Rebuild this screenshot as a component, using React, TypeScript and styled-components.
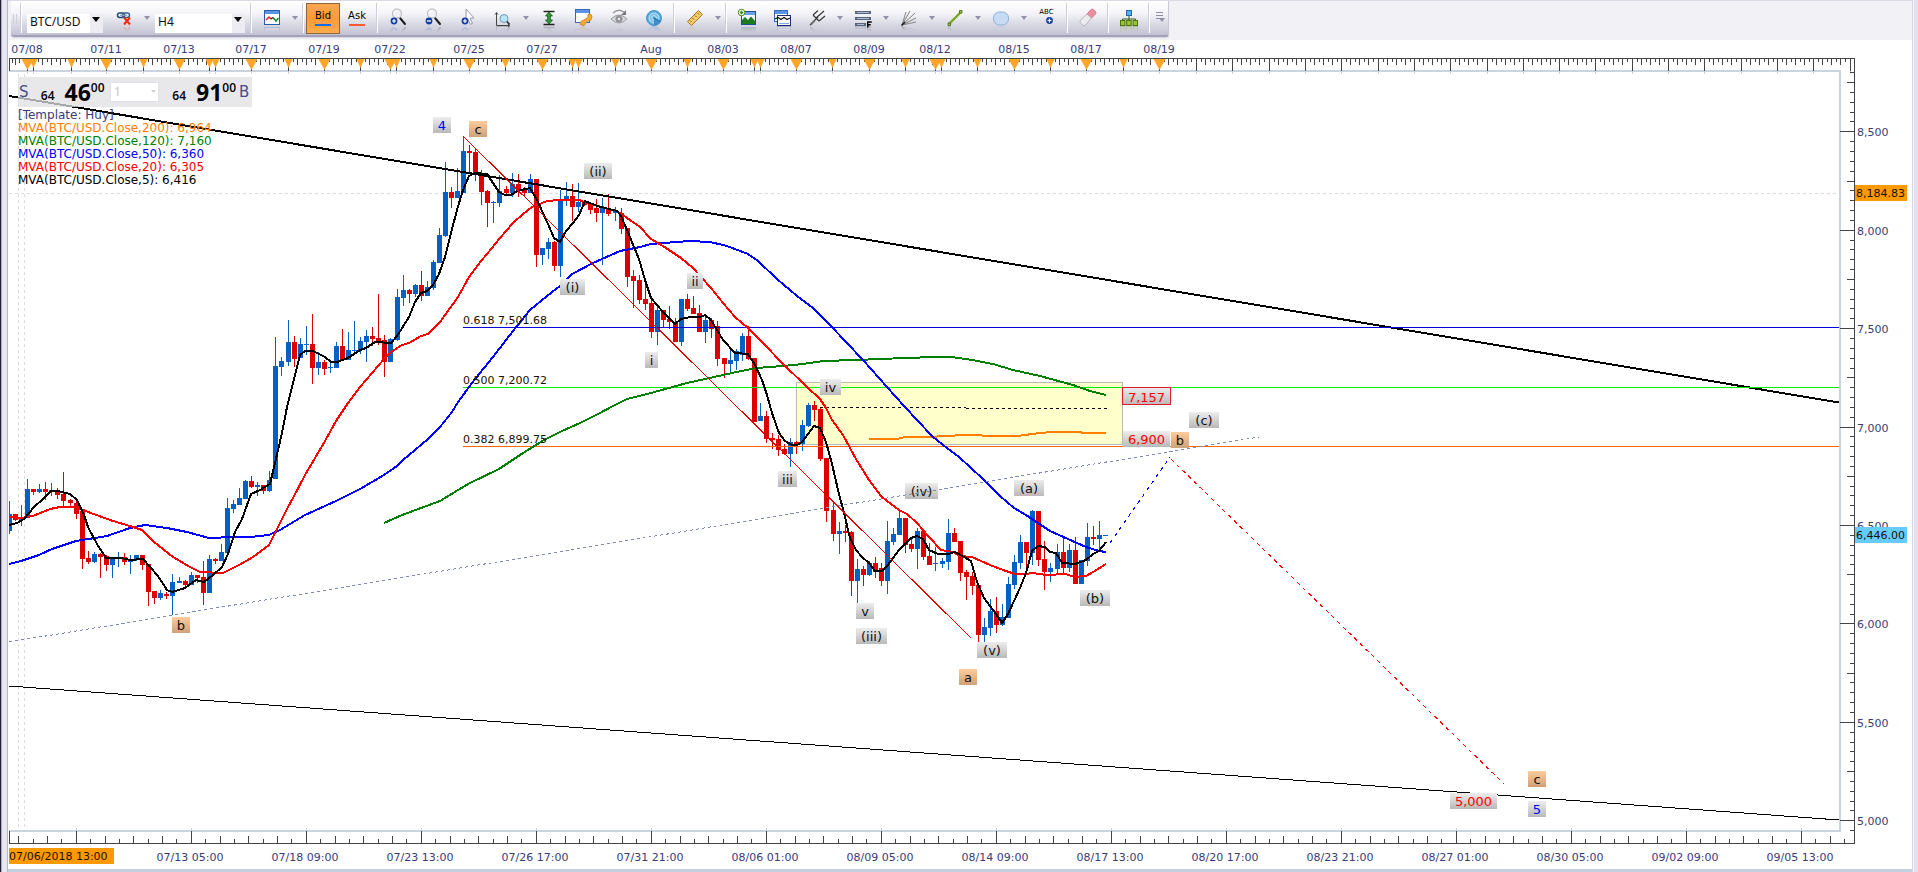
import React from "react";
import styled, { createGlobalStyle, css } from "styled-components";

const UI_FONT = '"Noto Sans", "Open Sans", sans-serif';
const CHART_FONT = '"DejaVu Sans", Verdana, sans-serif';
const INK = "#3b3a78";
const UP = "#0560c3";
const DOWN = "#dd0000";

const GlobalStyle = createGlobalStyle`
  body { margin: 0; background: #fff; font-family: ${UI_FONT}; }
  *, *::before, *::after { box-sizing: border-box; }
`;

/* ---------- window frame ---------- */

const Page = styled.div`
  display: flex;
  min-height: 100vh;
`;

const LeftRail = styled.div`
  flex: 0 0 8px;
  background: linear-gradient(to right, #23233a 1px, #a9a8bb 1px 2px, #e8e6f1 2px 7px, #b9b3cd 7px);
`;

const RightRail = styled.div`
  flex: 0 0 6px;
  background: linear-gradient(to right, #d6d6e4 1px, #f2f1f8 1px 2px, #e3e1ee 2px);
`;

const Main = styled.main`
  flex: 1;
  min-width: 0;
  display: flex;
  flex-direction: column;
`;

const BottomBar = styled.div`
  height: 3px;
  background: #c3d0e0;
`;

/* ---------- toolbar ---------- */

const ToolbarStrip = styled.header`
  height: 40px;
  padding-left: 3px;
  background: #f2f1f6;
  border-top: 1px solid #dcdae6;
`;

const Toolbar = styled.div`
  display: inline-flex;
  align-items: stretch;
  height: 36px;
  border-bottom: 2px solid #a3a1b9;
  border-right: 1px solid #c9c7d8;
  border-radius: 0 0 3px 3px;
  background: linear-gradient(#ffffff, #f5f5f9 35%, #dcdce7 65%, #c3c2d3);
  box-shadow: 0 1px 1px #d5d4e0;
`;

const Grip = styled.div`
  width: 7px;
  margin: 13px 0 11px;
  background: repeating-linear-gradient(to right, transparent 0 2px, #cfcedb 2px 3px);
`;

const Sep = styled.div`
  width: 6px;
  margin: 2px 0;
  background: linear-gradient(to right, transparent 2px, #cdccda 2px 3px, #ffffff 3px 4px, transparent 4px);
`;

const ToolButton = styled.button<{ $mirror?: boolean }>`
  width: 35px;
  padding: 0;
  border: 0;
  background: none;
  display: flex;
  align-items: center;
  justify-content: center;
  svg {
    width: 20px;
    height: 20px;
    ${(p) =>
      p.$mirror !== false &&
      css`
        -webkit-box-reflect: below -4px linear-gradient(transparent 60%, rgba(0, 0, 0, 0.35));
      `}
  }
`;

const CaretButton = styled.button`
  width: 11px;
  padding: 0;
  border: 0;
  background: none;
  display: flex;
  align-items: center;
  justify-content: center;
`;

const SideButton = styled.button<{ $bar: string; $on?: boolean }>`
  width: 34px;
  margin: 2px 0 1px;
  padding: 0 0 2px;
  border: 1px solid ${(p) => (p.$on ? "#8a6638" : "transparent")};
  background: ${(p) => (p.$on ? "linear-gradient(#f7a653, #ff9a38 50%, #ffac4e)" : "none")};
  display: flex;
  flex-direction: column;
  align-items: center;
  justify-content: center;
  font: 10px/12px ${CHART_FONT};
  color: #000;
  &::after {
    content: "";
    width: 16px;
    height: 2px;
    margin-top: 2px;
    background: ${(p) => p.$bar};
  }
`;

const Combo = styled.label<{ $width: number }>`
  position: relative;
  width: ${(p) => p.$width}px;
  height: 19px;
  margin: 8px 3px 0;
  select {
    appearance: none;
    width: 100%;
    height: 100%;
    padding: 0 14px 3px 3px;
    border: 0;
    border-radius: 0;
    background: linear-gradient(to left, #ececf2 13px, #fff 13px);
    font: 12px/16px ${UI_FONT};
    color: #111;
  }
  svg {
    position: absolute;
    right: 3px;
    top: 8px;
  }
`;

const Overflow = styled.button`
  width: 16px;
  padding: 0 0 2px;
  border: 0;
  background: none;
  display: flex;
  align-items: center;
  justify-content: center;
`;

const Caret = ({ color }: { color: string }) => (
  <svg width="8" height="5" viewBox="0 0 8 5" aria-hidden="true">
    <path d="M0 0h8L4 5z" fill={color} />
  </svg>
);

const DropCaret = ({ label }: { label: string }) => (
  <CaretButton aria-label={label}>
    <svg width="6" height="4" viewBox="0 0 6 4" aria-hidden="true">
      <path d="M0 0h6L3 4z" fill="#9392a8" />
    </svg>
  </CaretButton>
);

const plusBadge = (cx: number, cy: number) => (
  <g>
    <circle cx={cx} cy={cy} r="3.4" fill="#123fa0" />
    <path d={`M${cx - 2} ${cy}h4M${cx} ${cy - 2}v4`} stroke="#fff" strokeWidth="1.2" />
  </g>
);

const magnifier = (
  <g>
    <path d="M12 10l5 6" stroke="#1d1d20" strokeWidth="2" strokeLinecap="round" />
    <circle cx="9" cy="5.500" r="4.500" fill="#f1f1f4" stroke="#c2c2ca" strokeWidth="1.300" />
    <path d="M6 5q1-2.500 3.500-2.500" stroke="#fff" strokeWidth="1.500" fill="none" />
  </g>
);

const icons: Record<string, React.ReactNode> = {
  link: (
    <g fill="none">
      <rect x="3.500" y="5" width="7" height="4.500" rx="2.200" stroke="#27476f" strokeWidth="1.500" />
      <rect x="8.500" y="5" width="7" height="4.500" rx="2.200" stroke="#3c6390" strokeWidth="1.500" />
      <path d="M6 7.300h7" stroke="#7f9fc8" strokeWidth="1.200" />
      <path d="M10 9.500l6 7M16 9.500l-6 7" stroke="#f02a12" strokeWidth="2" />
    </g>
  ),
  chart: (
    <g>
      <rect x="2.500" y="2.500" width="15" height="14" fill="#fff" stroke="#2b5ca8" />
      <rect x="3" y="3" width="14" height="3" fill="#5a94e4" />
      <path d="M4 12l3-3 2 2" fill="none" stroke="#e02020" strokeWidth="1.500" />
      <path d="M9 11l2-1.500" stroke="#222" strokeWidth="1.500" />
      <path d="M11 9.500l3 3.500 2.500-3" fill="none" stroke="#1c8a2c" strokeWidth="1.500" />
    </g>
  ),
  zoomIn: (
    <g>
      {magnifier}
      {plusBadge(6, 13)}
    </g>
  ),
  zoomOut: (
    <g>
      {magnifier}
      <circle cx="6" cy="13" r="3.400" fill="#123fa0" />
      <path d="M4 13h4" stroke="#fff" strokeWidth="1.300" />
    </g>
  ),
  pointer: (
    <g>
      <path d="M8 1l8 9-4 .3 2.500 5-2.300 1-2.200-5L8 13z" fill="#fff" stroke="#9a9aa4" strokeWidth="1" />
      {plusBadge(7, 13)}
    </g>
  ),
  zoomAxis: (
    <g fill="none">
      <path d="M3.500 5v12.500H16M2 6.500l1.500-2 1.500 2M15 16l1.800 1.500-1.800 1.500" stroke="#444" />
      <circle cx="11" cy="10.500" r="4" fill="#b9e6f8" stroke="#6a9cb5" />
      <path d="M14 13.500l2.500 3" stroke="#333" strokeWidth="1.800" />
    </g>
  ),
  fit: (
    <g>
      <path d="M4.500 3.500h11M4.500 16.500h11" stroke="#222" strokeWidth="1.300" />
      <path d="M10 4l3.500 4h-2.200v4h2.200L10 16l-3.500-4h2.200V8H6.500z" fill="#2f9a32" stroke="#15591a" strokeWidth=".8" />
    </g>
  ),
  properties: (
    <g>
      <rect x="1.500" y="1.500" width="14" height="13" fill="#fff" stroke="#3a67b4" />
      <rect x="2" y="2" width="13" height="3" fill="#5a94e4" />
      <path d="M6 16.500l1-3 7-4V6.500q3-1.500 4 1.500l-1 4-4 1.500-3 4z" fill="#f4ac35" stroke="#c47a12" strokeWidth=".8" />
    </g>
  ),
  eye: (
    <g fill="none" stroke="#9a9a9f">
      <path d="M2 11q8-8 16 0-8 8-16 0z" fill="#d9d9dd" />
      <circle cx="10" cy="11" r="3.200" fill="#909096" />
      <circle cx="10" cy="11" r="1.200" fill="#eee" stroke="none" />
      <path d="M4 5q5-5 11-1" strokeWidth="1.300" />
      <path d="M17 2v5h-5z" fill="#77777c" stroke="none" />
    </g>
  ),
  radar: (
    <g>
      <circle cx="10" cy="10" r="7.500" fill="#55a8dc" stroke="#4a94c8" />
      <circle cx="10" cy="10" r="5" fill="#7cc3ea" stroke="#d5effb" strokeWidth=".8" />
      <circle cx="10" cy="10" r="2.300" fill="#55a8dc" stroke="#d5effb" strokeWidth=".8" />
      <path d="M10 10l6.800 3.500A7.500 7.500 0 0 1 10 17.500z" fill="#3d8fca" />
      <path d="M10 10l6.500 3.500" stroke="#2773aa" strokeWidth="1.200" />
    </g>
  ),
  ruler: (
    <g>
      <path d="M2.500 13.500l11-11 4 4-11 11z" fill="#f5cd67" stroke="#a6762a" />
      <path d="M5 12.500l1.500 1.500M7.500 10l1.500 1.500M10 7.500l1.500 1.500M12.500 5l1.500 1.500" stroke="#7d541c" />
    </g>
  ),
  picture: (
    <g>
      <rect x="4.500" y="3.500" width="14" height="13" fill="#eef6ff" stroke="#244f8f" />
      <rect x="5" y="4" width="13" height="3" fill="#6b9fe6" />
      <path d="M5 16v-4l3-3 3 3 3-3.500 4 4.500v3z" fill="#1d7a1f" />
      <circle cx="4.500" cy="4.500" r="3.300" fill="#f4fff0" stroke="#4e8a1c" />
      <path d="M2.800 4.500h3.400M4.500 2.800v3.400" stroke="#3c8410" strokeWidth="1.400" />
    </g>
  ),
  windows: (
    <g>
      <rect x="2.500" y="2.500" width="13" height="11" fill="#fff" stroke="#3a67b4" />
      <rect x="3" y="3" width="12" height="3" fill="#5a94e4" />
      <rect x="5.500" y="7.500" width="13" height="10" fill="#fff" stroke="#1d2f66" />
      <path d="M3 11l3-1.500 3 2 3-2 3 2 3-1.500" stroke="#111" fill="none" strokeWidth="1.200" />
      <path d="M7 15.500h10" stroke="#7aa7e6" />
    </g>
  ),
  pitchfork: (
    <g fill="none" stroke="#333" strokeWidth="1.100">
      <path d="M3 17l8-8M6 7l6 6M6 7l5-4.500M9 10l8-7M12 13l6-5" />
      <path d="M4 17l4-4" stroke="#888" />
    </g>
  ),
  fib: (
    <g>
      <path d="M2 4.500h16M2 10.500h16M2 16.500h11" stroke="#56657d" strokeWidth="3" />
      <path d="M4 4.500h12M4 10.500h12M4 16.500h7" stroke="#c6d0de" strokeWidth=".8" />
      <path d="M14.700 19.500v-5.500h4M14.700 16.700h3" stroke="#000" strokeWidth="1.400" fill="none" />
    </g>
  ),
  fan: (
    <g fill="none" stroke="#777" strokeWidth=".9">
      <path d="M3 17L7 4M3 17l8-14M3 17L16 5M3 17l14-7M3 17l14-3" />
      <path d="M2.500 17.500l3.500-3.500" stroke="#222" strokeWidth="1.600" />
    </g>
  ),
  line: (
    <g>
      <path d="M4 16L16 4" stroke="#79a81c" strokeWidth="2.400" />
      <path d="M3 15h2.500v2.500H3zM14.500 2.500H17V5h-2.500z" fill="#a9c94b" stroke="#41600a" strokeWidth=".8" />
    </g>
  ),
  shape: <rect x="2.500" y="4" width="15" height="13" rx="6" fill="#c6dcf4" stroke="#8fb0d4" />,
  eraser: (
    <g>
      <path d="M9 6l4-4.500q1-1 2.500 0l2 2q1 1 0 2.500L13.500 10z" fill="#eb8fa0" stroke="#cf7083" strokeWidth=".8" />
      <path d="M9 6l4.500 4-6 7q-1.500 1.500-3 0l-2-2q-1-1.500 0-3z" fill="#ececef" stroke="#aaaab2" strokeWidth=".8" />
    </g>
  ),
  tree: (
    <g>
      <path d="M10 7v4M3.500 13v-2h13v2M10 11v2" fill="none" stroke="#345d14" />
      <rect x="7.500" y="2.500" width="5" height="5" fill="#58aef2" stroke="#2268b0" />
      <rect x="1.500" y="12.500" width="4.500" height="5" fill="#98c62c" stroke="#4a7410" />
      <rect x="7.700" y="12.500" width="4.500" height="5" fill="#98c62c" stroke="#4a7410" />
      <rect x="14" y="12.500" width="4.500" height="5" fill="#98c62c" stroke="#4a7410" />
    </g>
  ),
};

const TextToolButton = styled.button`
  width: 35px;
  padding: 0 0 4px;
  border: 0;
  background: none;
  display: flex;
  flex-direction: column;
  align-items: center;
  justify-content: center;
  font: 7px/8px ${CHART_FONT};
  color: #000;
  svg {
    margin-left: 5px;
  }
`;

const Tool = ({ name, label, caret }: { name: string; label: string; caret?: boolean }) => (
  <>
    <ToolButton aria-label={label} title={label}>
      <svg viewBox="0 0 20 20" aria-hidden="true">
        {icons[name]}
      </svg>
    </ToolButton>
    {caret && <DropCaret label={`${label} options`} />}
  </>
);

const ChartToolbar = () => (
  <ToolbarStrip>
    <Toolbar role="toolbar" aria-label="Chart tools">
      <Grip />
      <Sep />
      <Combo $width={76}>
        <select aria-label="Symbol" defaultValue="BTC/USD">
          <option>BTC/USD</option>
        </select>
        <Caret color="#000" />
      </Combo>
      <Tool name="link" label="Link chart" caret />
      <Combo $width={90}>
        <select aria-label="Period" defaultValue="H4">
          <option>H4</option>
        </select>
        <Caret color="#000" />
      </Combo>
      <Sep />
      <Tool name="chart" label="Chart type" caret />
      <Sep />
      <SideButton $bar="#0a6fe8" $on>
        Bid
      </SideButton>
      <SideButton $bar="#ff5a32">Ask</SideButton>
      <Sep />
      <Tool name="zoomIn" label="Zoom in" />
      <Tool name="zoomOut" label="Zoom out" />
      <Tool name="pointer" label="Pointer" />
      <Tool name="zoomAxis" label="Axis zoom" caret />
      <Tool name="fit" label="Fit to height" />
      <Tool name="properties" label="Properties" />
      <Tool name="eye" label="Show or hide" />
      <Tool name="radar" label="Signals" />
      <Sep />
      <Tool name="ruler" label="Ruler" caret />
      <Sep />
      <Tool name="picture" label="Add indicator" />
      <Tool name="windows" label="Add overlay" />
      <Tool name="pitchfork" label="Pitchfork" caret />
      <Tool name="fib" label="Fibonacci" caret />
      <Tool name="fan" label="Fan" caret />
      <Tool name="line" label="Line" caret />
      <Tool name="shape" label="Shape" caret />
      <TextToolButton title="Text label">
        ABC
        <svg width="9" height="9" viewBox="0 0 9 9" aria-hidden="true">
          {plusBadge(4.5, 4.5)}
        </svg>
      </TextToolButton>
      <Sep />
      <Tool name="eraser" label="Erase" />
      <Sep />
      <Tool name="tree" label="Object tree" />
      <Sep />
      <Overflow aria-label="More tools">
        <svg width="10" height="12" viewBox="0 0 10 12" aria-hidden="true">
          <path d="M1 1.500h7M1 4.500h7M1 7.500h4" stroke="#8e8da3" />
          <path d="M4 7h6l-3 4z" fill="#8e8da3" />
        </svg>
      </Overflow>
    </Toolbar>
  </ToolbarStrip>
);

/* ---------- chart data ---------- */

type Candle = [high: number, top: number, bottom: number, low: number, up: 0 | 1];

const candles: Candle[] = [
  [501,514,531,534,1],[514,514,520,521,0],[505,519,520,526,1],[479,489,518,518,1],[489,489,492,495,0],
  [484,489,492,493,1],[482,489,492,500,0],[483,490,491,496,1],[488,490,495,499,0],[472,494,501,507,0],
  [499,500,503,507,0],[501,503,514,519,0],[511,511,559,569,0],[551,558,562,564,0],[552,554,562,563,1],
  [553,554,557,578,0],[555,556,565,571,0],[558,558,565,578,1],[552,558,559,567,1],[553,557,562,565,0],
  [555,561,562,574,1],[555,555,559,561,1],[555,555,565,570,0],[564,564,592,606,0],[591,591,598,604,0],
  [590,593,598,600,1],[592,594,596,599,0],[574,582,596,615,1],[577,581,583,583,1],[580,581,585,586,0],
  [572,575,585,585,1],[575,575,578,583,0],[561,577,593,605,0],[555,559,593,593,1],[558,559,561,564,0],
  [544,552,561,561,1],[498,508,553,553,1],[500,504,509,513,1],[488,498,505,505,1],[480,481,499,499,1],
  [476,481,487,488,0],[482,485,487,496,1],[485,485,491,494,0],[471,480,491,492,1],[337,366,479,479,1],
  [357,361,367,376,1],[320,342,362,366,1],[336,342,359,367,0],[338,344,358,358,1],[326,344,345,355,1],
  [314,344,368,384,0],[352,362,368,375,1],[360,362,369,375,0],[362,367,368,373,1],[342,346,368,368,1],
  [329,346,360,361,0],[332,350,360,360,1],[321,350,351,353,1],[337,341,350,354,1],[330,336,342,362,1],
  [327,336,339,346,0],[294,338,341,345,0],[335,340,362,377,0],[338,339,362,362,1],[289,297,340,341,1],
  [275,290,298,306,1],[289,290,294,303,0],[284,285,294,297,1],[271,285,296,301,0],[281,287,296,296,1],
  [260,262,288,290,1],[228,235,263,263,1],[162,192,236,237,1],[187,192,198,208,0],[168,191,198,198,1],
  [136,151,193,193,1],[145,151,153,173,0],[148,152,175,181,0],[170,174,192,205,0],[190,191,203,227,0],
  [201,202,203,223,1],[175,191,203,207,1],[186,189,193,196,0],[173,184,193,197,1],[174,184,189,197,0],
  [187,189,193,196,0],[174,179,193,193,1],[179,179,255,267,0],[248,248,255,265,1],[238,242,249,259,1],
  [241,242,266,271,0],[190,201,266,277,1],[182,196,201,206,1],[184,196,207,221,0],[183,202,207,212,1],
  [201,202,205,206,0],[203,204,210,214,0],[199,208,213,222,0],[198,208,213,265,1],[194,209,214,216,0],
  [207,211,213,221,1],[208,213,229,234,0],[228,228,277,287,0],[270,276,281,308,0],[275,280,300,304,0],
  [279,299,304,310,0],[296,303,332,338,0],[305,310,332,345,1],[310,310,320,328,0],[306,319,322,329,0],
  [318,322,342,342,0],[299,299,342,346,1],[294,299,309,311,0],[296,308,314,314,0],[305,313,332,332,0],
  [317,320,332,343,1],[318,320,329,338,0],[321,326,359,366,0],[358,358,364,378,0],[349,360,364,374,1],
  [349,351,361,370,1],[333,336,355,361,1],[326,336,359,360,0],[358,358,422,422,0],[403,416,421,421,1],
  [411,416,439,443,0],[433,438,440,449,0],[435,439,450,456,0],[444,449,454,455,0],[438,442,454,467,1],
  [441,442,444,454,0],[420,425,444,451,1],[403,405,426,427,1],[401,405,410,421,0],[407,409,459,461,0],
  [458,458,511,522,0],[503,510,534,541,0],[522,531,534,554,1],[525,531,533,542,0],[531,532,581,596,0],
  [559,569,581,603,1],[566,569,575,586,0],[561,563,575,576,1],[557,563,572,578,0],[563,568,581,586,0],
  [521,541,581,594,1],[528,534,542,545,1],[511,518,535,535,1],[518,518,545,553,0],[537,544,549,552,0],
  [528,531,549,569,1],[530,531,557,560,0],[543,556,565,565,0],[547,563,564,571,1],[558,561,564,568,1],
  [519,533,562,570,1],[528,533,542,542,0],[541,541,573,581,0],[570,572,577,600,0],[572,576,586,595,0],
  [585,585,635,642,0],[618,627,635,642,1],[599,611,628,636,1],[597,611,625,633,0],[604,617,625,626,1],
  [577,584,618,618,1],[555,562,585,589,1],[535,542,563,569,1],[542,542,553,568,0],[510,511,553,565,1],
  [511,511,560,566,0],[541,559,572,590,0],[563,568,572,582,1],[544,552,569,573,1],[536,552,568,574,0],
  [544,550,568,572,1],[537,550,584,584,0],[560,560,584,584,1],[523,537,561,566,1],[526,537,539,545,0],
  [521,535,539,550,1],[535,535,536,536,1],
];

const candleX = (i: number) => Math.round(9 + i * 6.0552);

const averages = [
  {
    name: "MVA 120", color: "#008000",
    points: "384,523 402,515 421,508 440,501 458,490 470,483 499,469 520,455 544,440 562,431 580,423 600,413 613,406 627,399 651,393 669,388 687,383 705,379 723,375 741,371 757,368 783,366 803,364 823,361 856,360 905,358 936,357 952,357 972,360 993,364 1013,370 1040,376 1073,385 1090,391 1106,395",
  },
  {
    name: "MVA 200", color: "#ff8000",
    points: "869,439 897,439 905,437 927,437 947,436 963,435 1000,436 1017,436 1040,433 1053,432 1080,432 1083,433 1106,433",
  },
  {
    name: "MVA 50", color: "#0000ff",
    points: "9,564 21,561 39,555 52,549 76,541 107,536 130,528 145,525 167,528 187,532 209,538 233,537 250,537 269,535 280,530 305,515 336,501 360,489 384,475 397,466 403,460 409,455 428,439 440,427 452,412 458,402 475,379 493,357 513,331 530,310 547,296 560,286 572,274 593,263 620,251 640,247 651,244 663,243 690,241 710,242 727,246 740,251 748,254 758,261 777,279 797,296 813,308 830,325 863,360 887,387 905,407 917,420 933,437 947,448 959,457 983,479 1000,496 1014,508 1026,515 1038,523 1050,531 1068,539 1086,547 1099,551 1106,552",
  },
  {
    name: "MVA 20", color: "#ff0000",
    points: "9,517 21,518 33,516 50,509 60,507 76,507 88,512 113,521 130,526 142,530 154,542 173,557 190,567 200,572 223,573 239,565 253,557 269,545 275,533 287,509 293,498 305,475 325,441 336,421 348,403 360,387 372,373 384,359 391,352 402,345 409,343 421,336 428,334 440,322 458,297 469,277 481,261 487,254 500,238 513,223 523,214 532,207 537,205 547,201 560,200 579,200 590,204 617,211 640,227 651,239 663,246 681,258 693,268 711,288 723,303 735,317 748,328 763,343 783,364 807,387 820,399 826,408 832,420 843,435 850,448 856,459 869,480 881,496 887,501 899,510 907,514 917,523 929,537 941,550 953,552 960,556 972,557 990,565 1003,570 1015,574 1026,574 1032,573 1047,575 1065,574 1075,577 1086,576 1093,572 1106,564",
  },
  {
    name: "MVA 5", color: "#000000",
    points: "9,525 17,523 24,519 34,507 43,499 51,491 58,491 70,494 77,500 84,515 88,527 97,544 106,558 121,558 130,560 143,559 150,567 158,576 167,590 172,592 185,588 196,580 204,582 213,575 222,567 228,554 235,532 242,519 251,494 260,490 270,484 275,463 282,433 287,407 293,383 300,355 305,351 313,351 325,357 331,362 337,362 348,358 360,350 366,348 375,342 391,343 397,336 409,317 415,302 421,293 427,291 433,285 439,274 445,257 451,233 457,210 463,190 469,176 475,173 487,174 493,183 499,192 505,195 511,195 517,191 530,188 537,200 548,224 554,238 560,242 566,231 573,223 579,215 585,201 597,206 617,211 621,216 627,230 639,259 645,280 651,298 663,312 675,324 681,319 690,317 700,317 705,315 711,320 723,340 735,353 748,354 755,365 762,380 767,395 772,413 779,433 785,441 792,445 797,445 802,442 808,434 814,426 820,428 826,442 832,464 838,490 844,513 850,538 856,550 862,557 869,563 875,571 882,571 887,566 899,550 911,538 917,536 923,539 929,550 938,554 948,554 955,552 971,561 977,582 984,598 996,614 1002,623 1008,614 1020,588 1026,573 1032,551 1038,546 1045,547 1050,552 1056,553 1062,563 1075,564 1086,560 1093,554 1099,551 1106,542",
  },
];

type Tone = "gray" | "tan";
interface WaveLabel { text: string; x: number; y: number; w: number; h?: number; tone?: Tone; color?: string; framed?: boolean }

const waves: WaveLabel[] = [
  { text: "4", x: 433, y: 117, w: 18, color: "#0000ff" },
  { text: "c", x: 469, y: 121, w: 18, tone: "tan" },
  { text: "(ii)", x: 584, y: 163, w: 28 },
  { text: "(i)", x: 560, y: 279, w: 25 },
  { text: "ii", x: 687, y: 273, w: 16 },
  { text: "i", x: 645, y: 352, w: 13 },
  { text: "iv", x: 820, y: 379, w: 21 },
  { text: "iii", x: 778, y: 471, w: 19 },
  { text: "(iv)", x: 905, y: 483, w: 33 },
  { text: "(a)", x: 1014, y: 480, w: 30 },
  { text: "(b)", x: 1080, y: 590, w: 30 },
  { text: "(v)", x: 977, y: 642, w: 30 },
  { text: "v", x: 856, y: 603, w: 18 },
  { text: "(iii)", x: 856, y: 628, w: 31 },
  { text: "a", x: 959, y: 669, w: 18, tone: "tan" },
  { text: "b", x: 172, y: 617, w: 18, tone: "tan" },
  { text: "(c)", x: 1189, y: 412, w: 30 },
  { text: "b", x: 1171, y: 432, w: 18, tone: "tan" },
  { text: "7,157", x: 1122, y: 387, w: 49, h: 18, color: "#ff0000", framed: true },
  { text: "6,900", x: 1123, y: 431, w: 47, color: "#ff0000" },
  { text: "5,000", x: 1450, y: 793, w: 47, color: "#ff0000" },
  { text: "c", x: 1528, y: 771, w: 18, tone: "tan" },
  { text: "5", x: 1528, y: 801, w: 18, color: "#0000ff" },
];

const fibLevels = [
  { text: "0.618 7,501.68", y: 327, color: "#0000e0" },
  { text: "0.500 7,200.72", y: 387, color: "#00f000" },
  { text: "0.382 6,899.75", y: 446, color: "#ff6600" },
];

/* Session starts along the top ruler; those with a date carry a larger marker. */
const sessions: [number, string?][] = [
  [27, "07/08"], [33], [71], [106, "07/11"], [143], [179, "07/13"], [209], [215], [251, "07/17"], [288],
  [324, "07/19"], [360], [390, "07/22"], [396], [433], [469, "07/25"], [505], [542, "07/27"], [572], [578],
  [615], [651, "Aug"], [687], [723, "08/03"], [754], [760], [796, "08/07"], [832], [869, "08/09"], [905],
  [935, "08/12"], [941], [977], [1014, "08/15"], [1050], [1086, "08/17"], [1123], [1159, "08/19"],
];
const futureSessions = Array.from({ length: 19 }, (_, k) => Math.round(1159.8 + 36.3 * (k + 1)));

const bottomDates = [
  "07/13 05:00", "07/18 09:00", "07/23 13:00", "07/26 17:00", "07/31 21:00", "08/06 01:00", "08/09 05:00",
  "08/14 09:00", "08/17 13:00", "08/20 17:00", "08/23 21:00", "08/27 01:00", "08/30 05:00", "09/02 09:00",
  "09/05 13:00",
];

const priceY = (price: number) => Math.round(820.3 - (price - 5000) * 0.19686);

const topTicks = (() => {
  const starts = [...sessions.map(([x]) => x), ...futureSessions];
  let d = "M12.500 59v4M15.500 59v6M19.500 59v4";
  let soft = "";
  starts.forEach((x, i) => {
    d += `M${x + 0.5} 59v12`;
    soft += `M${x + 0.5} 71v3`;
    const next = starts[i + 1] ?? 1850;
    for (let n = 1; x + n * 4.54 < next - 2 && x + n * 4.54 < 1850; n++) {
      d += `M${Math.round(x + n * 4.54) + 0.5} 59v${n % 2 ? 3 : 6}`;
    }
  });
  return { d, soft };
})();

const bottomTicks = (() => {
  let d = "M9.500 831v12";
  let soft = "";
  for (let n = -4; 76.3 + n * 14.375 < 1846; n++) {
    const x = Math.floor(76.3 + n * 14.375) + 0.5;
    const size = n % 8 === 0 ? 12 : n % 2 === 0 ? 7 : 4;
    d += `M${x} 843v${-size}`;
    if (size === 12) soft += `M${x} 828v3`;
  }
  return { d, soft };
})();

const priceTicks = (() => {
  let d = "";
  for (let p = 4950; p <= 8800; p += 50) {
    const size = p % 500 === 0 ? 14 : p % 250 === 0 ? 7 : 4;
    d += `M1854 ${priceY(p) + 0.5}h${-size}`;
  }
  return d;
})();

/* ---------- chart ---------- */

const ChartArea = styled.section`
  position: relative;
  flex: 1;
`;

const ChartSvg = styled.svg`
  display: block;
  width: 100%;
  height: auto;
  font-family: ${CHART_FONT};
  font-size: 11px;
`;

const AxisText = styled.text`
  fill: ${INK};
`;

const TagText = styled.text`
  fill: #1a1200;
`;

const WaveText = styled.text`
  font-size: 13px;
  text-anchor: middle;
`;

const Wave = ({ text, x, y, w, h = 16, tone = "gray", color = "#111", framed }: WaveLabel) => (
  <g>
    <rect x={x} y={y} width={w} height={h} fill={`url(#${tone})`} />
    {framed && <rect x={x + 0.5} y={y + 0.5} width={w - 1} height={h - 1} fill="none" stroke="#e01c2c" />}
    <WaveText x={x + w / 2} y={y + h - 3} fill={color}>
      {text}
    </WaveText>
  </g>
);

const PriceChart = () => (
  <ChartSvg viewBox="8 40 1904 829" role="img" aria-label="BTC/USD H4 price chart">
    <defs>
      <linearGradient id="gray" x1="0" y1="0" x2="0" y2="1">
        <stop offset="0" stopColor="#ededed" />
        <stop offset="1" stopColor="#b9b9b9" />
      </linearGradient>
      <linearGradient id="tan" x1="0" y1="0" x2="0" y2="1">
        <stop offset="0" stopColor="#ffcc9a" />
        <stop offset="1" stopColor="#cda17a" />
      </linearGradient>
      <clipPath id="plot">
        <rect x="9" y="72" width="1830" height="758" />
      </clipPath>
    </defs>

    {/* top ruler */}
    <g shapeRendering="crispEdges" fill="none">
      <path d={topTicks.soft + bottomTicks.soft} stroke="#c8cfdc" />
      <path d="M9 71H1840V831H9" stroke="#cbd3de" strokeWidth="2" />
      <path d="M9 58.500H1855" stroke="#444" />
      <path d="M9.500 59v12" stroke="#444" />
      <path d={topTicks.d} stroke="#444" />
    </g>
    {sessions.map(([x, label]) => {
      const r = label ? 6 : 4;
      return <path key={x} d={`M${x + 0.5 - r} 59h${r * 2}l${-r} ${label ? 11 : 9}z`} fill="#ffa52a" />;
    })}
    {sessions.map(([x, label]) =>
      label ? (
        <AxisText key={x} x={x} y={53} textAnchor="middle">
          {label}
        </AxisText>
      ) : null
    )}

    {/* plot */}
    <g clipPath="url(#plot)" shapeRendering="crispEdges">
      <path d="M9 193.500H1839M18.500 74V830M24.500 74V830" stroke="#dddddd" strokeDasharray="3 3" fill="none" />
      <rect x="796.500" y="382.500" width="326" height="62" fill="#ffffcc" stroke="#b9b9b9" />
      {candles.map(([high, top, bottom, low, up], i) => (
        <g key={i} fill={up ? UP : DOWN}>
          <rect x={candleX(i)} y={high} width="1" height={Math.max(1, low - high)} />
          <rect x={candleX(i) - 2} y={top} width="5" height={Math.max(1, bottom - top)} />
        </g>
      ))}
      <path d="M820 407.500H966M966 408.500H1110" stroke="#000" strokeDasharray="3 3" fill="none" />
      <path d="M9 96L1839 402.500" stroke="#000" strokeWidth="2" />
      <path d="M9 686L1839 820" stroke="#000" />
      {fibLevels.map((f) => (
        <path key={f.text} d={`M463 ${f.y + 0.5}H1839`} stroke={f.color} />
      ))}
      {averages.map((a) => (
        <polyline key={a.name} points={a.points} fill="none" stroke={a.color} strokeWidth="2" strokeLinejoin="round" />
      ))}
      <path d="M463 136L971 638" stroke="#e00000" />
      <path d="M1110 543L1170 457" stroke="#0000ff" strokeDasharray="4 4" />
      <path d="M1171 459L1504 784" stroke="#ff0000" strokeDasharray="4 4" />
    </g>
    {fibLevels.map((f) => (
      <TagText key={f.text} x={463} y={f.y - 3}>
        {f.text}
      </TagText>
    ))}
    {waves.map((w) => (
      <Wave key={`${w.x}-${w.y}`} {...w} />
    ))}
    <path d="M9 642L1259 437" stroke="#8088b4" strokeDasharray="3 3" shapeRendering="crispEdges" />

    {/* price axis */}
    <path d={`M1854.500 59V843${priceTicks}`} stroke="#444" fill="none" shapeRendering="crispEdges" />
    {[8500, 8000, 7500, 7000, 6500, 6000, 5500, 5000].map((p) => (
      <AxisText key={p} x={1857} y={priceY(p) + 5}>
        {p.toLocaleString("en-US")}
      </AxisText>
    ))}
    <rect x="1855" y="185" width="52" height="16" fill="#ff9900" />
    <TagText x={1856} y={197}>8,184.83</TagText>
    <rect x="1855" y="527" width="52" height="16" fill="#66ccff" />
    <TagText x={1856} y={539}>6,446.00</TagText>

    {/* time axis */}
    <path d={`M9 843.500H1855${bottomTicks.d}`} stroke="#444" fill="none" shapeRendering="crispEdges" />
    {bottomDates.map((label, k) => (
      <AxisText key={label} x={190 + 115 * k} y={861} textAnchor="middle">
        {label}
      </AxisText>
    ))}
    <rect x="9" y="848" width="105" height="16" fill="#ff9900" />
    <TagText x={9} y={860}>07/06/2018 13:00</TagText>
  </ChartSvg>
);

/* ---------- quote panel and legend over the plot ---------- */

const Overlay = styled.div`
  position: absolute;
  left: 10px;
  top: 37px;
`;

const QuotePanel = styled.div`
  display: flex;
  align-items: center;
  width: 234px;
  height: 30px;
  background: rgba(224, 224, 228, 0.75);
`;

const Side = styled.button`
  display: flex;
  align-items: flex-start;
  width: 92px;
  height: 30px;
  padding: 0 1px;
  border: 0;
  background: none;
  color: #000;
  font-family: ${UI_FONT};
`;

const SideLetter = styled.span`
  font: 15px/30px ${CHART_FONT};
  color: #4b4a85;
`;

const Handle = styled.span`
  width: 26px;
  margin-right: 10px;
  text-align: right;
  font: 600 12px/38px "Open Sans", sans-serif;
`;

const Pips = styled.span`
  display: flex;
  margin-right: 3px;
  font: bold 23px/30px "Open Sans", sans-serif;
  sup {
    font: 600 12px/22px "Open Sans", sans-serif;
  }
`;

const Amount = styled.label`
  position: relative;
  width: 49px;
  height: 20px;
  select {
    appearance: none;
    display: block;
    width: 100%;
    height: 100%;
    padding: 0 3px;
    border: 1px solid #e2e2e6;
    border-radius: 0;
    background: #fff;
    font: 12px/16px ${UI_FONT};
    color: #c4c4c8;
  }
  svg {
    position: absolute;
    right: 3px;
    top: 8px;
  }
`;

const Legend = styled.ul`
  margin: 2px 0 0;
  padding: 0;
  list-style: none;
  font: 12px/13px ${CHART_FONT};
  white-space: nowrap;
`;

const LegendItem = styled.li<{ $color: string }>`
  color: ${(p) => p.$color};
`;

const legend = [
  ["[Template: Huy]", INK],
  ["MVA(BTC/USD.Close,200): 6,964", "#ff8000"],
  ["MVA(BTC/USD.Close,120): 7,160", "#008000"],
  ["MVA(BTC/USD.Close,50): 6,360", "#0000ff"],
  ["MVA(BTC/USD.Close,20): 6,305", "#ff0000"],
  ["MVA(BTC/USD.Close,5): 6,416", "#000000"],
];

export default function App() {
  return (
    <>
      <GlobalStyle />
      <Page>
        <LeftRail />
        <Main>
          <ChartToolbar />
          <ChartArea>
            <PriceChart />
            <Overlay>
              <QuotePanel>
                <Side>
                  <SideLetter>S</SideLetter>
                  <Handle>64</Handle>
                  <Pips>
                    46<sup>00</sup>
                  </Pips>
                </Side>
                <Amount>
                  <select aria-label="Amount" defaultValue="1">
                    <option>1</option>
                  </select>
                  <svg width="5" height="3" viewBox="0 0 5 3" aria-hidden="true">
                    <path d="M0 0h5L2.500 3z" fill="#d0d0d4" />
                  </svg>
                </Amount>
                <Side>
                  <Handle>64</Handle>
                  <Pips>
                    91<sup>00</sup>
                  </Pips>
                  <SideLetter>B</SideLetter>
                </Side>
              </QuotePanel>
              <Legend>
                {legend.map(([text, color]) => (
                  <LegendItem key={text} $color={color}>
                    {text}
                  </LegendItem>
                ))}
              </Legend>
            </Overlay>
          </ChartArea>
          <BottomBar />
        </Main>
        <RightRail />
      </Page>
    </>
  );
}
